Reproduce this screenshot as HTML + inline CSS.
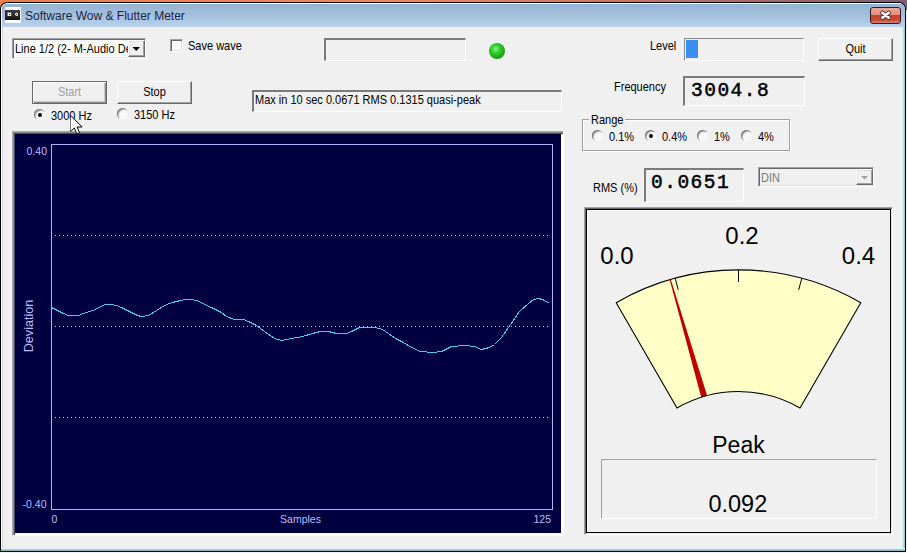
<!DOCTYPE html>
<html><head><meta charset="utf-8">
<style>
*{margin:0;padding:0;box-sizing:border-box}
html,body{width:907px;height:553px;overflow:hidden;background:#f2f2f4}
body{position:relative;font-family:"Liberation Sans",sans-serif;font-size:11px;color:#000}
.a{position:absolute}
#desk{left:0;top:0;width:907px;height:10px;background:linear-gradient(90deg,#e8804c 0%,#f08860 45%,#c87468 70%,#7a6070 100%)}
#win{left:0;top:2px;width:906px;height:550px;background:#000;border-radius:7px 7px 0 0}
#frame{left:1px;top:3px;width:904px;height:548px;background:linear-gradient(90deg,#fff 0px,#fff 1px,#c8d8ea 1px,#c8d8ea 2px,#e6eef8 2px);border-radius:6px 6px 0 0}
#rframe{left:902px;top:27px;width:3px;height:524px;background:linear-gradient(90deg,#e6eef8 0px,#e6eef8 1px,#c4e2ec 1px,#80c0d0 3px)}
#title{left:2px;top:4px;width:903px;height:23px;background:linear-gradient(180deg,#94b4d4 0%,#a4c0dc 50%,#b6d2ec 100%);border-radius:5px 5px 0 0}
#tline{left:6px;top:3px;width:895px;height:1px;background:#fff}
#client{left:3px;top:27px;width:899px;height:521px;background:#f0f0f0}
#bottomline{left:1px;top:548px;width:904px;height:3px;background:linear-gradient(180deg,#e6eef8 0px,#e6eef8 1px,#b0d8e2 1px,#70b4c4 3px)}
.ttl{left:25px;top:10px;font-size:12px;color:#1a2440;white-space:nowrap}
.btn{background:#f0f0f0;border-top:1px solid #fff;border-left:1px solid #fff;border-right:1px solid #696969;border-bottom:1px solid #696969;box-shadow:inset -1px -1px 0 #a0a0a0;text-align:center}
.sunk{border-top:1px solid #a0a0a0;border-left:1px solid #a0a0a0;border-right:1px solid #fff;border-bottom:1px solid #fff;box-shadow:inset 1px 1px 0 #696969}
.sunk2{border-top:2px solid #7a7a7a;border-left:2px solid #7a7a7a;border-right:1px solid #fff;border-bottom:1px solid #fff;}
.t{white-space:nowrap;line-height:1}
.s{transform:scaleY(1.1);transform-origin:0 0}
.radio{width:11px;height:11px;border-radius:50%;background:#f8f8f8;box-shadow:inset 1px 1px 0 #7a7a7a, inset 2px 2px 0 #c4c4c4}
.dot{width:4px;height:4px;border-radius:50%;background:#000;left:4px;top:4px}
.mono{font-family:"Liberation Mono",monospace;font-weight:normal;-webkit-text-stroke:0.5px #000}
</style></head><body>
<div class="a" id="desk"></div>
<div class="a" id="win"></div>
<div class="a" id="frame"></div>
<div class="a" id="title"></div>
<div class="a" id="tline"></div>
<div class="a" id="rframe"></div>
<div class="a" id="client"></div>
<div class="a" id="bottomline"></div>

<!-- title icon -->
<div class="a" style="left:5px;top:7px;width:16px;height:16px;background:#fff"></div>
<div class="a" style="left:5px;top:10px;width:15px;height:10px;background:linear-gradient(180deg,#3a3a3a 0%,#282828 60%,#101010 100%)"></div>
<svg class="a" style="left:5px;top:10px" width="15" height="10" viewBox="0 0 15 10"><path d="M2.6 2.6 H6.2 V6 H2.6 Z" fill="#f4f4f4"/><rect x="4" y="4" width="1" height="1" fill="#333"/><path d="M9.8 4.3 L11 2.5 L12.4 2.7 L13.2 4.3 L12.4 6 L11 6.1 Z" fill="#f4f4f4"/><rect x="11" y="3.8" width="1" height="1" fill="#333"/></svg>
<div class="a t ttl">Software Wow &amp; Flutter Meter</div>

<!-- close button -->
<div class="a" style="left:870px;top:7px;width:31px;height:17px;border:1px solid #3a1a1a;border-radius:3px;background:linear-gradient(180deg,#eaa898 0%,#e09080 45%,#c8442c 50%,#c84a34 80%,#e08070 100%)"></div>
<svg class="a" style="left:870px;top:7px" width="31" height="17" viewBox="0 0 31 17">
<path d="M12.3 5.8 L18.7 10.6 M18.7 5.8 L12.3 10.6" stroke="#5a3030" stroke-width="4.4" stroke-linecap="round"/>
<path d="M12.3 5.8 L18.7 10.6 M18.7 5.8 L12.3 10.6" stroke="#fff" stroke-width="2.6" stroke-linecap="round"/>
</svg>



<!-- graph panel -->
<div class="a" style="left:12px;top:131px;width:552px;height:405px;background:#000040;border-top:1px solid #a8a8a8;border-left:1px solid #a8a8a8;border-right:1px solid #fff;border-bottom:1px solid #fff;box-shadow:inset 1px 1px 0 #8c8c8c, inset 2px 2px 0 #4a4a5a, inset -1px -1px 0 #fff, inset -2px -2px 0 #f8f8ff"></div>
<svg class="a" style="left:0;top:0" width="907" height="553" viewBox="0 0 907 553">
<rect x="51.5" y="144.5" width="501" height="365" fill="none" stroke="#b0b0ff" stroke-width="1"/>
<g stroke="#b8b8ff" stroke-width="1" stroke-dasharray="1 3">
<line x1="55" y1="235.5" x2="549" y2="235.5"/>
<line x1="55" y1="326.5" x2="549" y2="326.5"/>
<line x1="55" y1="417.5" x2="549" y2="417.5"/>
</g>
<path d="M51.5 307.5 L57.5 310.5 L63.5 313.5 L68.5 315.5 L78.5 315.5 L83.5 313.5 L92.5 310.5 L99.5 307.5 L104.5 304.5 L111.5 304.5 L116.5 305.5 L121.5 307.5 L129.5 311.5 L137.5 315.5 L141.5 316.5 L148.5 315.5 L156.5 310.5 L164.5 305.5 L169.5 303.5 L172.5 302.5 L180.5 300.5 L186.5 299.5 L190.5 299.5 L197.5 300.5 L202.5 303.5 L211.5 307.5 L221.5 312.5 L226.5 316.5 L234.5 319.5 L243.5 319.5 L248.5 321.5 L256.5 325.5 L264.5 331.5 L274.5 338.5 L281.5 340.5 L291.5 338.5 L302.5 336.5 L312.5 333.5 L320.5 331.5 L328.5 331.5 L336.5 333.5 L346.5 333.5 L351.5 331.5 L359.5 327.5 L375.5 327.5 L382.5 329.5 L388.5 333.5 L395.5 338.5 L403.5 342.5 L411.5 347.5 L420.5 351.5 L432.5 352.5 L441.5 351.5 L451.5 346.5 L464.5 345.5 L474.5 346.5 L481.5 349.5 L489.5 347.5 L494.5 344.5 L501.5 337.5 L508.5 327.5 L519.5 311.5 L528.5 303.5 L533.5 299.5 L538.5 298.5 L542.5 299.5 L549.5 303.5" fill="none" stroke="#4cc8f0" stroke-width="1" shape-rendering="crispEdges"/>
<g fill="#bcbcff" font-family="Liberation Sans" font-size="10.5">
<text x="47" y="155" text-anchor="end">0.40</text>
<text x="46.5" y="507.5" text-anchor="end">-0.40</text>
<text x="51.5" y="522.7">0</text>
<text x="300.5" y="522.5" text-anchor="middle">Samples</text>
<text x="551" y="522.8" text-anchor="end">125</text>
<text transform="translate(32.5 326) rotate(-90)" text-anchor="middle" font-size="12.6">Deviation</text>
</g>
</svg>


<!-- meter panel -->
<div class="a" style="left:584px;top:207px;width:309px;height:328px;border-top:1px solid #a0a0a0;border-left:1px solid #a0a0a0;border-right:1px solid #fff;border-bottom:1px solid #fff;box-shadow:inset 1px 1px 0 #696969, inset -1px -1px 0 #e3e3e3"></div>
<div class="a" style="left:586px;top:209px;width:305px;height:324px;border:1px solid #000;box-shadow:inset 1px 1px 0 #fff"></div>
<svg class="a" style="left:0;top:0" width="907" height="553" viewBox="0 0 907 553">
<defs><clipPath id="cp"><path d="M616.20 302.67 A244.6 244.6 0 0 1 860.80 302.67 L800.00 407.98 A123 123 0 0 0 677.00 407.98 Z"/></clipPath></defs>
<path d="M616.20 302.67 A244.6 244.6 0 0 1 860.80 302.67 L800.00 407.98 A123 123 0 0 0 677.00 407.98 Z" fill="#ffffc8" stroke="none"/>
<path d="M701.49 398.21 L669.68 279.78 L670.83 279.44 L707.44 396.48 Z" fill="#c00000" clip-path="url(#cp)"/>
<path d="M616.20 302.67 A244.6 244.6 0 0 1 860.80 302.67 L800.00 407.98 A123 123 0 0 0 677.00 407.98 Z" fill="none" stroke="#000" stroke-width="1.1"/>
<g stroke="#000" stroke-width="1"><line x1="675.19" y1="278.23" x2="678.30" y2="289.83"/><line x1="738.50" y1="269.90" x2="738.50" y2="281.90"/><line x1="801.81" y1="278.23" x2="798.70" y2="289.83"/></g>
<g fill="#000" font-family="Liberation Sans" font-size="24">
<text x="617" y="264" text-anchor="middle">0.0</text>
<text x="742" y="244" text-anchor="middle">0.2</text>
<text x="858.5" y="263.5" text-anchor="middle">0.4</text>
<text x="738.5" y="452.7" text-anchor="middle" font-size="23">Peak</text>
<text x="737.8" y="511.9" text-anchor="middle" font-size="23.5">0.092</text>
</g>
</svg>
<div class="a" style="left:601px;top:459px;width:276px;height:60px;border-top:1px solid #a0a0a0;border-left:1px solid #a0a0a0;border-right:1px solid #fff;border-bottom:1px solid #fff"></div>

<!-- combobox -->
<div class="a" style="left:12px;top:38px;width:134px;height:21px;background:#fff;border-top:1px solid #a0a0a0;border-left:1px solid #a0a0a0;border-right:1px solid #fff;border-bottom:1px solid #fff;box-shadow:inset 1px 1px 0 #696969, inset -1px -1px 0 #e3e3e3"></div>
<div class="a t s" style="left:15px;top:42.5px;font-size:11px;width:113px;overflow:hidden;height:14px">Line 1/2 (2- M-Audio Delta</div>
<div class="a btn" style="left:128px;top:40px;width:17px;height:17px;border-right:1px solid #696969;border-bottom:1px solid #696969;box-shadow:inset -1px -1px 0 #a0a0a0, inset 1px 1px 0 #e3e3e3"></div>
<svg class="a" style="left:128px;top:40px" width="17" height="17"><path d="M4.5 7 L12 7 L8.25 11 Z" fill="#000"/></svg>

<!-- checkbox -->
<div class="a" style="left:170px;top:39px;width:13px;height:13px;background:#fff;border-top:1px solid #a0a0a0;border-left:1px solid #a0a0a0;border-right:1px solid #fff;border-bottom:1px solid #fff;box-shadow:inset 1px 1px 0 #696969, inset -1px -1px 0 #e3e3e3"></div>
<div class="a t s" style="left:188px;top:40px;font-size:11px">Save wave</div>

<!-- empty box -->
<div class="a sunk2" style="left:324px;top:38px;width:142px;height:23px;background:#f0f0f0"></div>

<!-- LED -->
<div class="a" style="left:488.5px;top:42.5px;width:16px;height:16px;border-radius:50%;background:radial-gradient(circle at 42% 38%,#90f090 0%,#30d030 30%,#14a814 65%,#0a700a 100%)"></div>

<!-- level -->
<div class="a t s" style="left:650px;top:40px;font-size:11px">Level</div>
<div class="a sunk" style="left:684px;top:38px;width:120px;height:23px;background:#f0f0f0;border-top-color:#888;border-left-color:#888;box-shadow:none"></div>
<div class="a" style="left:686px;top:40px;width:12px;height:18px;background:#3a8ef0"></div>

<!-- quit -->
<div class="a btn" style="left:818px;top:38px;width:75px;height:23px"></div>
<div class="a t s" style="left:818px;top:43px;width:75px;text-align:center;font-size:11px">Quit</div>

<!-- start / stop -->
<div class="a btn" style="left:32px;top:81px;width:75px;height:23px;border-top:1px solid #696969;border-left:1px solid #696969;border-right:1px solid #696969;border-bottom:1px solid #696969;box-shadow:inset 1px 1px 0 #fff, inset -1px -1px 0 #8a8a8a, inset -2px -2px 0 #c8c8c8"></div>
<div class="a t s" style="left:32px;top:86px;width:75px;text-align:center;font-size:11px;color:#a0a0a0">Start</div>
<div class="a btn" style="left:117px;top:81px;width:75px;height:23px"></div>
<div class="a t s" style="left:117px;top:86px;width:75px;text-align:center;font-size:11px">Stop</div>

<!-- radios hz -->
<div class="a radio" style="left:34px;top:109px"><div class="a dot"></div></div>
<div class="a t s" style="left:51px;top:110px;font-size:11px">3000 Hz</div>
<div class="a radio" style="left:117px;top:108px"></div>
<div class="a t s" style="left:134px;top:109px;font-size:11px">3150 Hz</div>

<!-- max box -->
<div class="a sunk2" style="left:252px;top:90px;width:310px;height:22px;background:#f0f0f0"></div>
<div class="a t s" style="left:255px;top:94px;font-size:11px">Max in 10 sec 0.0671 RMS 0.1315 quasi-peak</div>

<!-- frequency -->
<div class="a t s" style="left:614px;top:81px;font-size:11px">Frequency</div>
<div class="a sunk2" style="left:683px;top:76px;width:122px;height:30px;background:#f0f0f0"></div>
<div class="a t mono" style="left:691px;top:82px;font-size:19.5px;letter-spacing:1.5px">3004.8</div>

<!-- range -->
<div class="a" style="left:582px;top:119px;width:208px;height:32px;border:1px solid #a0a0a0;box-shadow:1px 1px 0 #fff inset, 1px 1px 0 #fff"></div>
<div class="a t s" style="left:589px;top:114px;font-size:11px;background:#f0f0f0;padding:0 2px">Range</div>
<div class="a radio" style="left:592px;top:130px"></div>
<div class="a t s" style="left:609px;top:131px;font-size:11px">0.1%</div>
<div class="a radio" style="left:645px;top:130px"><div class="a dot"></div></div>
<div class="a t s" style="left:662px;top:131px;font-size:11px">0.4%</div>
<div class="a radio" style="left:697px;top:130px"></div>
<div class="a t s" style="left:714px;top:131px;font-size:11px">1%</div>
<div class="a radio" style="left:741px;top:130px"></div>
<div class="a t s" style="left:758px;top:131px;font-size:11px">4%</div>

<!-- rms -->
<div class="a t s" style="left:593px;top:182px;font-size:11px">RMS (%)</div>
<div class="a sunk2" style="left:644px;top:168px;width:100px;height:34px;background:#f0f0f0"></div>
<div class="a t mono" style="left:651px;top:174px;font-size:19.5px;letter-spacing:1.5px">0.0651</div>

<!-- DIN combo -->
<div class="a" style="left:758px;top:167px;width:116px;height:20px;background:#f0f0f0;border-top:1px solid #a0a0a0;border-left:1px solid #a0a0a0;border-right:1px solid #fff;border-bottom:1px solid #fff;box-shadow:inset 1px 1px 0 #696969, inset -1px -1px 0 #e3e3e3"></div>
<div class="a t s" style="left:761px;top:172px;font-size:11px;color:#7a7a7a">DIN</div>
<div class="a btn" style="left:856px;top:169px;width:17px;height:16px;border-right:1px solid #696969;border-bottom:1px solid #696969;box-shadow:inset -1px -1px 0 #a0a0a0, inset 1px 1px 0 #e3e3e3"></div>
<svg class="a" style="left:856px;top:169px" width="17" height="16"><path d="M5 7 L12 7 L8.5 10.5 Z" fill="#a0a0a0"/></svg>

<svg class="a" style="left:0;top:0" width="907" height="553" viewBox="0 0 907 553">
<defs><clipPath id="cc"><rect x="0" y="0" width="907" height="131"/></clipPath></defs>
<path clip-path="url(#cc)" transform="translate(70.5 115.2)" d="M0 0 L0 16.5 L3.8 12.8 L6.3 18.6 L9 17.5 L6.6 11.8 L11.6 11.8 Z" fill="#fff" stroke="#000" stroke-width="1" stroke-linejoin="miter"/>
</svg>
</body></html>
